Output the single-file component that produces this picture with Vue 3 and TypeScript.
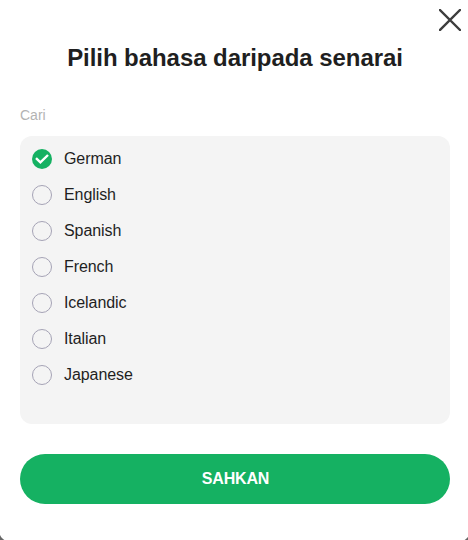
<script setup lang="ts">
import { ref } from 'vue'

const languages: string[] = ['German', 'English', 'Spanish', 'French', 'Icelandic', 'Italian', 'Japanese']
const selected = ref<string>('German')
const search = ref<string>('')
</script>

<template>
  <div class="backdrop">
    <section class="modal" role="dialog">
      <button class="close" type="button">
        <svg width="22" height="22" viewBox="0 0 22 22" fill="none">
          <path d="M1 1L21 21M21 1L1 21" stroke="#3d3d3d" stroke-width="2.4" stroke-linecap="square" />
        </svg>
      </button>
      <h1 class="title">Pilih bahasa daripada senarai</h1>
      <input v-model="search" class="search" type="text" placeholder="Cari" />
      <ul class="list">
        <li v-for="lang in languages" :key="lang" class="item" @click="selected = lang">
          <svg v-if="selected === lang" class="radio" width="20" height="20" viewBox="0 0 20 20" fill="none">
            <circle cx="10" cy="10" r="10" fill="#15b162" />
            <path d="M4 9.2L8.4 13.4L16 6" stroke="#fff" stroke-width="2.4" />
          </svg>
          <svg v-else class="radio" width="20" height="20" viewBox="0 0 20 20" fill="none">
            <circle cx="10" cy="10" r="9.5" stroke="#a5a3b5" />
          </svg>
          <span>{{ lang }}</span>
        </li>
      </ul>
      <button class="confirm" type="button">SAHKAN</button>
    </section>
  </div>
</template>

<style>
body {
  overflow: hidden;
}
</style>

<style scoped>
.backdrop {
  height: 540px;
  overflow: hidden;
  background: #666;
  font-family: 'Liberation Sans', Arial, sans-serif;
}
.modal {
  position: relative;
  box-sizing: border-box;
  width: 471px;
  height: 542px;
  margin-left: -1px;
  padding: 43px 20px 0 21px;
  border-radius: 0 0 12px 12px;
  background: #fff;
}
.close {
  position: absolute;
  top: 9px;
  right: 9px;
  padding: 0;
  border: 0;
  background: none;
  line-height: 0;
}
.title {
  margin: 0;
  color: #1f1f1f;
  font-size: 24px;
  line-height: 30px;
  letter-spacing: -0.06px;
  text-align: center;
}
.search {
  display: block;
  box-sizing: border-box;
  width: 100%;
  height: 24px;
  margin: 30px 0 9px;
  padding: 0;
  border: 0;
  outline: 0;
  background: none;
  color: #1f1f1f;
  font: 14px 'Liberation Sans', Arial, sans-serif;
}
.search::placeholder {
  color: #b3b3b3;
}
.list {
  box-sizing: border-box;
  height: 288px;
  margin: 0 0 30px;
  padding: 5px 12px;
  border-radius: 12px;
  background: #f4f4f4;
  list-style: none;
}
.item {
  display: flex;
  align-items: center;
  gap: 12px;
  height: 36px;
  color: #1f1f1f;
  font-size: 16px;
  line-height: 18px;
  letter-spacing: -0.08px;
}
.confirm {
  display: block;
  width: 100%;
  height: 50px;
  padding: 0 0 0 1px;
  border: 0;
  border-radius: 25px;
  background: #15b162;
  color: #fff;
  font: bold 16px 'Liberation Sans', Arial, sans-serif;
  letter-spacing: -0.15px;
}
</style>
